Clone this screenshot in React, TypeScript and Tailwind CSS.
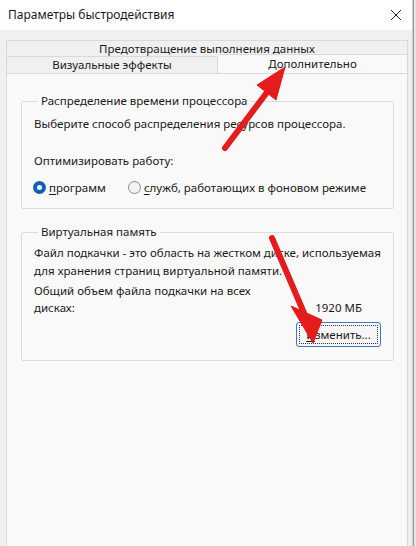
import { ReactNode } from 'react'

// Performance options dialog (Advanced tab) with two red callout arrows

function Radio({ checked, children }: { checked?: boolean; children: ReactNode }) {
  return (
    <label className="flex items-center gap-[3px]">
      {checked ? (
        <span className="w-[13px] h-[13px] rounded-full bg-[#0f5fb4] flex items-center justify-center">
          <span className="w-[5px] h-[5px] rounded-full bg-white" />
        </span>
      ) : (
        <span className="w-[13px] h-[13px] rounded-full border border-[#8a8a8a] bg-[#f3f3f3]" />
      )}
      <span>{children}</span>
    </label>
  )
}

function Group({ title, className, children }: { title: string; className?: string; children: ReactNode }) {
  return (
    <fieldset className={`border border-[#dcdcdc] rounded-[2px] px-[11px] ${className ?? ''}`}>
      <legend className="ml-[5px] px-[3px] leading-[16px]">{title}</legend>
      {children}
    </fieldset>
  )
}

function Arrows() {
  return (
    <svg className="absolute inset-0 pointer-events-none" width="416" height="546" viewBox="0 0 416 546">
      <defs>
        <filter id="soft" x="-20%" y="-20%" width="140%" height="140%">
          <feGaussianBlur stdDeviation="0.6" />
        </filter>
      </defs>
      <g fill="#e51a1e" stroke="#e51a1e" filter="url(#soft)">
        <line x1="225" y1="148" x2="268" y2="91" strokeWidth="6" strokeLinecap="round" />
        <polygon points="285,67 257,85 276,100" strokeWidth="1" strokeLinejoin="round" />
        <line x1="272" y1="238" x2="304" y2="313" strokeWidth="6" strokeLinecap="round" />
        <polygon points="313,343 291,306 322,320" strokeWidth="1" strokeLinejoin="round" />
      </g>
    </svg>
  )
}

export default function App() {
  return (
    <div
      className="relative w-[416px] h-[546px] overflow-hidden bg-[#f0f0f0] text-[11.5px] text-[#1a1a1a] flex whitespace-nowrap"
      style={{ fontFamily: '"Noto Sans", "Liberation Sans", sans-serif' }}
    >
      <div className="flex-1 flex flex-col border-r border-[#cfcfcf]">
        {/* title bar */}
        <div className="h-[30px] bg-white flex items-center justify-between pl-[8px] pr-[10px] shrink-0">
          <span className="text-[12px]">Параметры быстродействия</span>
          <svg width="12" height="12" viewBox="0 0 12 12">
            <path d="M1 1 L11 11 M11 1 L1 11" stroke="#222" strokeWidth="1" />
          </svg>
        </div>

        {/* body */}
        <div className="flex-1 flex flex-col pt-[10px] pl-[6px] pr-[4px]">
          <div className="h-[16px] border border-b-0 border-[#dadada] bg-[#f0f0f0] flex items-center justify-center pt-[1px]">
            Предотвращение выполнения данных
          </div>
          <div className="flex h-[17px]">
            <div className="w-[212px] border border-b-0 border-[#dadada] bg-[#f0f0f0] flex items-center justify-center">
              Визуальные эффекты
            </div>
            <div className="flex-1 -mt-[2px] h-[20px] border-t border-r border-[#dadada] bg-[#f9f9f9] flex items-center justify-center pb-[2px]">
              Дополнительно
            </div>
          </div>

          <div className="flex-1 bg-[#f9f9f9] border border-b-0 border-[#dadada] pl-[14px] pr-[13px] pt-[19px] flex flex-col gap-[15px]">
            <Group title="Распределение времени процессора" className="h-[116px]">
              <p className="mt-[6px] pl-[1px]">Выберите способ распределения ресурсов процессора.</p>
              <p className="mt-[20px] pl-[1px]">Оптимизировать работу:</p>
              <div className="mt-[9px] flex items-center gap-[22px]">
                <Radio checked>
                  <span className="underline underline-offset-2">п</span>рограмм
                </Radio>
                <Radio>
                  <span className="underline underline-offset-2">с</span>лужб, работающих в фоновом режиме
                </Radio>
              </div>
            </Group>

            <Group title="Виртуальная память" className="h-[137px]">
              <p className="mt-[4px] pl-[1px] leading-[18px]">
                Файл подкачки - это область на жестком диске, используемая
                <br />
                для хранения страниц виртуальной памяти.
              </p>
              <div className="mt-[2px] flex items-end justify-between pl-[1px] pr-[20px]">
                <p className="leading-[17px]">
                  Общий объем файла подкачки на всех
                  <br />
                  дисках:
                </p>
                <span className="leading-[17px]">1920 МБ</span>
              </div>
              <div className="mt-[6px] flex justify-end pr-[1px]">
                <button className="w-[85px] h-[25px] border border-[#3c78c8] rounded-[3px] bg-[#f6f6f6] p-[2px]">
                  <span className="w-full h-full border border-dotted border-[#333] flex items-center justify-center">
                    <span>
                      <span className="underline underline-offset-2">И</span>зменить...
                    </span>
                  </span>
                </button>
              </div>
            </Group>
          </div>
        </div>
      </div>
      <div className="w-[3px] bg-[#e6e6e6] border-l border-[#9a9a9a]" />
      <Arrows />
    </div>
  )
}
